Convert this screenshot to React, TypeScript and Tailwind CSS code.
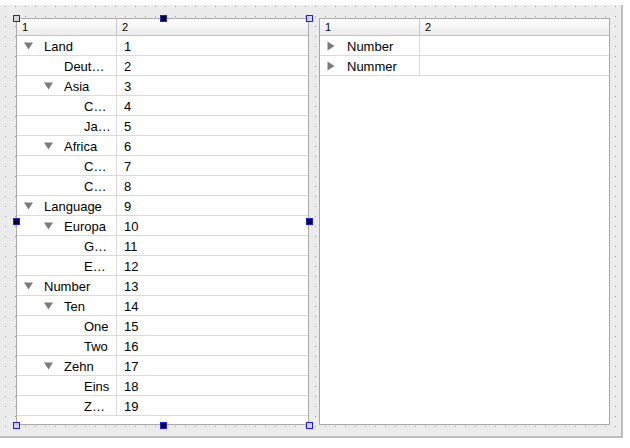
import React from 'react';

interface Row {
  label: string;
  value: string;
  level: number;
  branch?: boolean;
}

const leftRows: Row[] = [
  { label: 'Land', value: '1', level: 0, branch: true },
  { label: 'Deut…', value: '2', level: 1 },
  { label: 'Asia', value: '3', level: 1, branch: true },
  { label: 'C…', value: '4', level: 2 },
  { label: 'Ja…', value: '5', level: 2 },
  { label: 'Africa', value: '6', level: 1, branch: true },
  { label: 'C…', value: '7', level: 2 },
  { label: 'C…', value: '8', level: 2 },
  { label: 'Language', value: '9', level: 0, branch: true },
  { label: 'Europa', value: '10', level: 1, branch: true },
  { label: 'G…', value: '11', level: 2 },
  { label: 'E…', value: '12', level: 2 },
  { label: 'Number', value: '13', level: 0, branch: true },
  { label: 'Ten', value: '14', level: 1, branch: true },
  { label: 'One', value: '15', level: 2 },
  { label: 'Two', value: '16', level: 2 },
  { label: 'Zehn', value: '17', level: 1, branch: true },
  { label: 'Eins', value: '18', level: 2 },
  { label: 'Z…', value: '19', level: 2 },
];

const indent = ['pl-[7px]', 'pl-[27px]', 'pl-[47px]'];

const ArrowDown = () => (
  <svg width="9" height="8" viewBox="0 0 9 8">
    <polygon points="0,0.5 9,0.5 4.5,7.5" fill="#7b7b7b" />
  </svg>
);

const ArrowRight = () => (
  <svg width="8" height="10" viewBox="0 0 8 10">
    <polygon points="0.5,0.5 7.5,5 0.5,9.5" fill="#7b7b7b" />
  </svg>
);

function Header() {
  return (
    <div className="flex h-[17px] border-b border-[#c4c4c4] bg-[linear-gradient(#ffffff,#ebebeb)] text-[11px] leading-[17px] text-black">
      <div className="w-[100px] border-r border-[#c8c8c8] pl-[5px]">1</div>
      <div className="flex-1 pl-[5px]">2</div>
    </div>
  );
}

function TreeRow({ row, right }: { row: Row; right?: boolean }) {
  return (
    <div className="flex h-[20px] border-b border-[#dadada] text-[13px] leading-[21px] text-black">
      <div className={`flex w-[100px] overflow-hidden whitespace-nowrap border-r border-[#dadada] ${indent[row.level]}`}>
        <span className="flex w-[20px] shrink-0 items-center">
          {right ? <ArrowRight /> : row.branch ? <ArrowDown /> : null}
        </span>
        <span>{row.label}</span>
      </div>
      <div className="flex-1 pl-[7px]">{row.value}</div>
    </div>
  );
}

function Handle({ className, filled }: { className: string; filled?: boolean }) {
  return (
    <div
      className={`absolute z-10 h-[7px] w-[7px] border border-[#1a1aff] ${filled ? 'bg-black' : 'bg-[#d4d4dc]'} ${className}`}
    />
  );
}

export default function App() {
  return (
    <div className="relative h-[448px] w-[630px] bg-white pt-[5px] font-['Liberation_Sans',Arial,sans-serif]">
      <div className="flex h-[433px] w-[623px] gap-[10px] border-b-2 border-r-2 border-[#bdbdbd] bg-[#ececec] bg-[radial-gradient(circle_at_5.5px_1.5px,#9c9c9c_0.7px,transparent_1px)] bg-size-[10px_10px] pl-[16px] pt-[13px]">
        {/* left tree */}
        <div className="h-[407px] w-[293px] overflow-hidden border border-[#a9a9a9] bg-white">
          <Header />
          {leftRows.map((r, i) => (
            <TreeRow key={i} row={r} />
          ))}
        </div>

        {/* right tree */}
        <div className="h-[407px] w-[291px] overflow-hidden border border-[#a9a9a9] bg-white">
          <Header />
          <TreeRow row={{ label: 'Number', value: '', level: 0 }} right />
          <TreeRow row={{ label: 'Nummer', value: '', level: 0 }} right />
        </div>
      </div>

      {/* selection handles */}
      <Handle className="left-[13px] top-[15px]" />
      <Handle className="left-[160px] top-[15px]" filled />
      <Handle className="left-[306px] top-[15px]" />
      <Handle className="left-[13px] top-[218px]" filled />
      <Handle className="left-[306px] top-[218px]" filled />
      <Handle className="left-[13px] top-[422px]" />
      <Handle className="left-[160px] top-[422px]" filled />
      <Handle className="left-[306px] top-[422px]" />
    </div>
  );
}
